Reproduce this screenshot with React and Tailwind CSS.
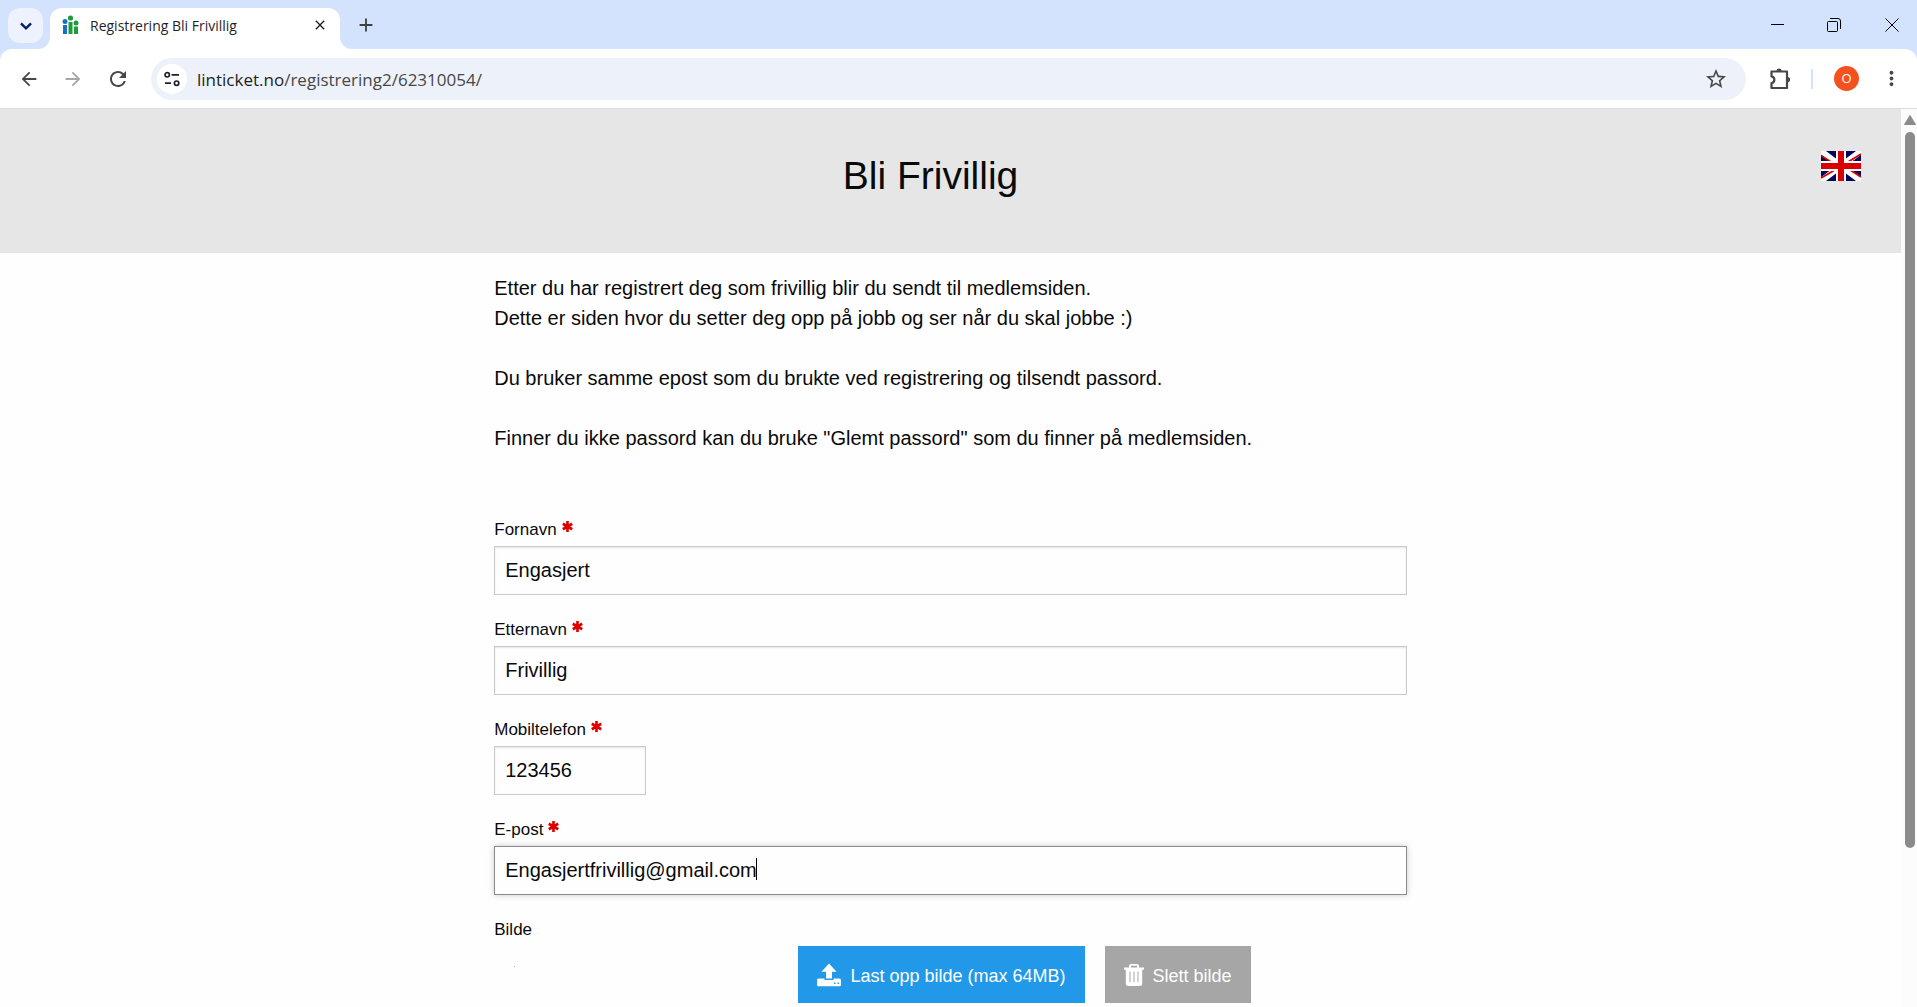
import React, { useState } from "react";
import {
  MdArrowBack,
  MdArrowForward,
  MdClose,
  MdAdd,
  MdMoreVert,
  MdRefresh,
  MdStarBorder,
} from "react-icons/md";

const Favicon = () => (
  <svg viewBox="0 0 17 20" className="h-5 w-[17px] shrink-0">
    <circle cx="3" cy="6.5" r="2.5" fill="#1b6fc0" />
    <rect x="1" y="10" width="4" height="9" fill="#1b6fc0" />
    <circle cx="8.5" cy="3" r="2.6" fill="#1f9a3c" />
    <rect x="6.5" y="7" width="4" height="12" fill="#1f9a3c" />
    <circle cx="14" cy="8" r="2.5" fill="#1f9a3c" />
    <rect x="12" y="11.5" width="4" height="7.5" fill="#1f9a3c" />
  </svg>
);

const TabFlare = ({ flip }) => (
  <svg
    viewBox="0 0 12 12"
    className={`h-3 w-3 self-end ${flip ? "-scale-x-100" : ""}`}
  >
    <path d="M12 0v12H0A12 12 0 0 0 12 0z" fill="#fff" />
  </svg>
);

const TuneIcon = () => (
  <svg
    viewBox="0 0 16 16"
    className="h-4 w-4"
    fill="none"
    stroke="#1f1f2b"
    strokeWidth="1.7"
  >
    <circle cx="3.2" cy="3.8" r="2.2" />
    <path d="M7.6 3.8H15M1 12.2h6" />
    <circle cx="12.6" cy="12.2" r="2.2" />
  </svg>
);

const ExtensionIcon = () => (
  <svg viewBox="0 0 22 22" className="h-[22px] w-[22px]">
    <path
      d="M2.5 3.5h15.5v16.5H2.5v-5c3.800-.6 3.800-6 0-6.600z"
      fill="none"
      stroke="#474747"
      strokeWidth="2.2"
      strokeLinejoin="round"
    />
    <path d="M7.5 3a2.600 2.600 0 0 1 5.200 0zM18.500 9a2.600 2.600 0 0 1 0 5.200z" fill="#474747" />
  </svg>
);

const Flag = () => (
  <svg viewBox="0 0 40 30" className="h-[30px] w-10">
    <rect width="40" height="30" fill="#00085c" />
    <path d="M0 0l40 30M40 0L0 30" stroke="#fff" strokeWidth="6" />
    <path
      d="M0 4.500L10 11M30 19.500L40 26M40 3L27 11M13 19.500L0 27"
      stroke="#d80000"
      strokeWidth="1.800"
    />
    <path d="M20 0v30M0 15h40" stroke="#fff" strokeWidth="10" />
    <path d="M20 0v30M0 15h40" stroke="#d80000" strokeWidth="6" />
  </svg>
);

const UploadIcon = () => (
  <svg viewBox="0 0 24 24" className="h-6 w-6" fill="#fff">
    <path d="M12 .5l7.500 8.300H15v6.700H9V8.800H4.500z" />
    <path
      fillRule="evenodd"
      d="M1.500 15.500H7.500v1.500h9v-1.500h6q1.500 0 1.500 1.500v4.700q0 1.500-1.500 1.500h-21Q0 23.200 0 21.700V17q0-1.500 1.500-1.500zM17 19.500v1.500h1.500v-1.500zM20.500 19.500v1.500H22v-1.500z"
    />
  </svg>
);

const TrashIcon = () => (
  <svg viewBox="0 0 20 22" className="h-[22px] w-5" fill="#fff">
    <path
      fillRule="evenodd"
      d="M7 0h6q2 0 2 2v1.500h5v2.300h-1.800V19.500q0 2.500-2.500 2.500H4.300q-2.500 0-2.500-2.500V5.800H0V3.500h5V2q0-2 2-2zM7 1.800v1.700h6V1.800zM5.500 7.500v10.500h1V7.500zM9.500 7.500v10.500h1V7.500zM13.500 7.500v10.500h1V7.500z"
    />
  </svg>
);

const Asterisk = () => (
  <svg
    viewBox="0 0 10 10"
    className="mb-2 ml-[5px] inline-block h-[11px] w-[11px]"
    stroke="#dd0000"
    strokeWidth="2.400"
  >
    <path d="M5 0v10M.7 2.500l8.600 5M9.300 2.500l-8.600 5" />
  </svg>
);

const TitleBar = () => (
  <div className="flex h-[49px] justify-between bg-[#d3e3fd]">
    <div className="flex pt-2">
      <button
        aria-label="Søk i faner"
        className="ml-2 flex h-[35px] w-[35px] items-center justify-center rounded-xl bg-[#edf2fc]"
      >
        <svg viewBox="0 0 12 8" className="h-2 w-3" fill="none" stroke="#041e6a" strokeWidth="2.400">
          <path d="M1 1.300l5 5 5-5" />
        </svg>
      </button>
      <div className="-ml-[5px] flex">
        <TabFlare />
        <div className="flex w-[290px] items-center rounded-t-xl bg-white px-3 pb-[7px]">
          <Favicon />
          <span className="ml-[11px] flex-1 text-[14px] text-[#1f1f2b]">
            Registrering Bli Frivillig
          </span>
          <button aria-label="Lukk fane" className="text-[#1f1f2b]">
            <MdClose className="h-4 w-4" />
          </button>
        </div>
        <TabFlare flip />
      </div>
      <button aria-label="Ny fane" className="mb-2 ml-[3px] text-[#3c4043]">
        <MdAdd className="h-[22px] w-[22px]" />
      </button>
    </div>
    <div className="flex items-center pr-[18px] text-black">
      <button aria-label="Minimer">
        <svg viewBox="0 0 14 14" className="h-[14px] w-[14px]" stroke="currentColor">
          <path d="M0 6.500h13" />
        </svg>
      </button>
      <button aria-label="Gjenopprett" className="ml-[42px]">
        <svg viewBox="0 0 14 14" className="h-[14px] w-[14px]" fill="none" stroke="currentColor">
          <rect x=".5" y="3.500" width="10" height="10" rx="1" />
          <path d="M3 .5h8q2.500 0 2.500 2.500v8" />
        </svg>
      </button>
      <button aria-label="Lukk" className="ml-[44px]">
        <svg viewBox="0 0 14 14" className="h-[14px] w-[14px]" stroke="currentColor">
          <path d="M.5.5l13 13M13.500.5l-13 13" />
        </svg>
      </button>
    </div>
  </div>
);

const Toolbar = () => (
  <div className="bg-[#d3e3fd]">
    <div className="flex h-[60px] items-center rounded-t-xl border-b border-[#dcdcdc] bg-white pr-[14px] pl-[18px] text-[#474747]">
      <button aria-label="Tilbake">
        <MdArrowBack className="h-[22px] w-[22px]" />
      </button>
      <button aria-label="Frem" className="ml-[22px] text-[#a6a6a6]">
        <MdArrowForward className="h-[22px] w-[22px]" />
      </button>
      <button aria-label="Last inn på nytt" className="ml-[22px]">
        <MdRefresh className="h-6 w-6" />
      </button>
      <div className="ml-[21px] flex h-[42px] flex-1 items-center rounded-full bg-[#edf2fa] pr-[18px] pl-[6px]">
        <button
          aria-label="Nettstedsinformasjon"
          className="flex h-[30px] w-[30px] items-center justify-center rounded-full bg-white"
        >
          <TuneIcon />
        </button>
        <span className="ml-[10px] flex-1 pt-[2px] text-[17px] text-[#474747]">
          <span className="text-[#1f1f1f]">linticket.no</span>
          /registrering2/62310054/
        </span>
        <button aria-label="Bokmerk">
          <MdStarBorder className="h-6 w-6" />
        </button>
      </div>
      <button aria-label="Utvidelser" className="ml-[23px]">
        <ExtensionIcon />
      </button>
      <div className="ml-5 h-5 w-[2px] bg-[#d3e3fd]" />
      <button
        aria-label="Profil"
        className="ml-[21px] h-[25px] w-[25px] rounded-full bg-[#f4511e] text-[13px] text-white"
      >
        O
      </button>
      <button aria-label="Meny" className="ml-[21px]">
        <MdMoreVert className="h-[23px] w-[23px]" />
      </button>
    </div>
  </div>
);

const Field = ({ id, label, value, onChange, type, small, active }) => (
  <div className="mb-[19px]">
    <label htmlFor={id} className="block h-8 text-[17px] leading-8">
      {label}
      <Asterisk />
    </label>
    <div className="relative">
      <input
        id={id}
        type={type}
        required
        value={value}
        onChange={onChange}
        className={`block h-[49px] border bg-[#fefefe] px-[10px] text-[20px] caret-transparent outline-none ${
          small ? "w-1/6" : "w-full"
        } ${
          active
            ? "border-[#8a8a8a] shadow-[0_0_6px_#cacaca]"
            : "border-[#cacaca] shadow-[inset_0_1px_2px_rgba(10,10,10,0.1)]"
        }`}
      />
      {active && <span className="absolute top-3 left-[262px] h-[22px] w-px bg-black" />}
    </div>
  </div>
);

const Scrollbar = () => (
  <div className="flex w-4 shrink-0 flex-col items-center bg-[#fcfcfc] pt-[6px] pb-4 pl-[2px]">
    <svg viewBox="0 0 12 10" className="h-[10px] w-3">
      <path d="M6 .5L11.500 9.500H.5z" fill="#8b8b8b" stroke="#8b8b8b" strokeLinejoin="round" />
    </svg>
    <div className="mt-[7px] w-[10px] flex-1">
      <div className="h-5/6 rounded-full bg-[#8b8b8b]" />
    </div>
  </div>
);

const App = () => {
  const [form, setForm] = useState({
    fornavn: "Engasjert",
    etternavn: "Frivillig",
    mobil: "123456",
    epost: "Engasjertfrivillig@gmail.com",
  });

  const fields = [
    { id: "fornavn", label: "Fornavn", type: "text" },
    { id: "etternavn", label: "Etternavn", type: "text" },
    { id: "mobil", label: "Mobiltelefon", type: "tel", small: true },
    { id: "epost", label: "E-post", type: "text", active: true },
  ];

  return (
    <div className="flex h-screen flex-col overflow-hidden">
      <div className="shrink-0 font-['Open_Sans',sans-serif]">
        <TitleBar />
        <Toolbar />
      </div>
      <div className="flex min-h-0 flex-1 font-['Liberation_Sans',Arial,sans-serif] text-[#0a0a0a]">
        <div className="flex-1 overflow-hidden bg-[#fefefe]">
          <header className="grid h-36 bg-[#e6e6e6] pt-[39px] pr-10">
            <h1 className="col-start-1 row-start-1 text-center text-[39px] leading-14">
              Bli Frivillig
            </h1>
            <a
              href="#"
              aria-label="English"
              className="col-start-1 row-start-1 mt-[3px] self-start justify-self-end"
            >
              <Flag />
            </a>
          </header>
          <main className="mx-auto w-1/2 px-[19px] pt-5">
            <p className="mb-[61px] text-[20px] leading-[30px]">
              Etter du har registrert deg som frivillig blir du sendt til medlemsiden.
              <br />
              Dette er siden hvor du setter deg opp på jobb og ser når du skal jobbe :)
              <br />
              <br />
              Du bruker samme epost som du brukte ved registrering og tilsendt passord.
              <br />
              <br />
              Finner du ikke passord kan du bruke "Glemt passord" som du finner på medlemsiden.
            </p>
            <form>
              {fields.map((x) => (
                <Field
                  key={x.id}
                  {...x}
                  value={form[x.id]}
                  onChange={(e) => setForm({ ...form, [x.id]: e.target.value })}
                />
              ))}
              <div className="text-[17px] leading-8">Bilde</div>
              <div className="flex">
                <div className="w-1/3 p-5">
                  <div className="h-px w-px bg-[#b0b0b0]" />
                </div>
                <div className="flex gap-5 text-[18px] text-[#fefefe]">
                  <button
                    type="button"
                    className="flex h-[57px] items-center bg-[#2199e8] px-[19px]"
                  >
                    <UploadIcon />
                    <span className="mt-1 ml-[9px]">Last opp bilde (max 64MB)</span>
                  </button>
                  <button
                    type="button"
                    className="flex h-[57px] items-center bg-[#a6a6a6] px-[19px]"
                  >
                    <TrashIcon />
                    <span className="mt-1 ml-[9px]">Slett bilde</span>
                  </button>
                </div>
              </div>
            </form>
          </main>
        </div>
        <Scrollbar />
      </div>
    </div>
  );
};

export default App;
